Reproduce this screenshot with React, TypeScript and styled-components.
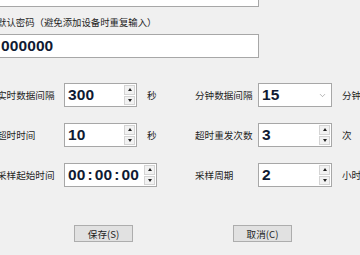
import React from 'react';
import styled, { createGlobalStyle } from 'styled-components';
import { ChevronDown } from 'lucide-react';

const GlobalStyle = createGlobalStyle`
  html, body {
    margin: 0;
    padding: 0;
    background: #f0f0f0;
  }
`;

const Page = styled.div`
  width: 360px;
  height: 255px;
  overflow: hidden;
  background: #f0f0f0;
  font-family: "Noto Sans CJK SC", "Noto Sans", sans-serif;
  font-size: 10px;
  color: #1e1e1e;
`;

const Form = styled.div`
  margin-left: -3px;
  display: flex;
  flex-direction: column;
`;

const TextBox = styled.div<{ $top?: number }>`
  box-sizing: border-box;
  width: 262px;
  height: 24px;
  margin-top: ${(p) => p.$top ?? 0}px;
  background: #fff;
  border: 1px solid #a7a7a7;
  display: flex;
  align-items: center;
  padding-left: 3px;
`;

const Value = styled.span`
  font-family: "Liberation Sans", Arial, sans-serif;
  font-weight: bold;
  font-size: 15.5px;
  color: #0f1a33;
  letter-spacing: 0.1px;
`;

const Colon = styled.span`
  margin: 0 2px;
`;

const Caption = styled.div`
  height: 12px;
  line-height: 12px;
  margin-top: 9px;
  margin-bottom: 6px;
  white-space: nowrap;
  font-size: 9.4px;
`;

const Grid = styled.div`
  display: grid;
  grid-template-columns: 67px 73px 58px 63px 74px 1fr;
  grid-auto-rows: 24px;
  row-gap: 16px;
  margin-top: 25px;
  align-items: center;
`;

const Label = styled.div`
  font-size: 9.6px;
  white-space: nowrap;
`;

const Unit = styled.div`
  padding-left: 10px;
  font-size: 9.6px;
  white-space: nowrap;
`;

const Control = styled.div<{ $w?: number; $span?: number }>`
  box-sizing: border-box;
  width: ${(p) => p.$w ?? 73}px;
  height: 24px;
  grid-column: span ${(p) => p.$span ?? 1};
  background: #fff;
  border: 1px solid #a7a7a7;
  display: flex;
  align-items: center;
  padding: 1px 1px 1px 3px;
`;

const Field = styled.div`
  flex: 1;
  display: flex;
  align-items: center;
  height: 100%;
`;

const Spin = styled.div`
  width: 11px;
  height: 100%;
  display: flex;
  flex-direction: column;
  gap: 1px;
`;

const SpinBtn = styled.div<{ $up?: boolean }>`
  flex: 1;
  box-sizing: border-box;
  border: 1px solid #d4d4d4;
  background: #f2f2f2;
  display: flex;
  align-items: center;
  justify-content: center;

  &::after {
    content: '';
    width: 0;
    height: 0;
    border-left: 2.5px solid transparent;
    border-right: 2.5px solid transparent;
    ${(p) => (p.$up ? 'border-bottom: 3px solid #222;' : 'border-top: 3px solid #222;')}
  }
`;

const Chevron = styled.div`
  width: 16px;
  display: flex;
  align-items: center;
  justify-content: center;
  color: #808080;
`;

const Buttons = styled.div`
  display: grid;
  grid-template-columns: 59px 59px;
  column-gap: 100px;
  margin-top: 38px;
  margin-left: 74px;
`;

const Button = styled.div`
  box-sizing: border-box;
  height: 17px;
  background: #e1e1e1;
  border: 1px solid #adadad;
  display: flex;
  align-items: center;
  justify-content: center;
  font-size: 9.6px;
  color: #1e1e1e;
`;

const SpinBox: React.FC<{ children: React.ReactNode; w?: number; span?: number }> = ({ children, w, span }) => (
  <Control $w={w} $span={span}>
    <Field>
      <Value>{children}</Value>
    </Field>
    <Spin>
      <SpinBtn $up />
      <SpinBtn />
    </Spin>
  </Control>
);

const ComboBox: React.FC<{ value: string }> = ({ value }) => (
  <Control $w={74}>
    <Field>
      <Value>{value}</Value>
    </Field>
    <Chevron>
      <ChevronDown size={9} strokeWidth={1.5} />
    </Chevron>
  </Control>
);

export default function App() {
  return (
    <Page>
      <GlobalStyle />
      <Form>
        <TextBox $top={-17} />
        <Caption>默认密码（避免添加设备时重复输入）</Caption>
        <TextBox>
          <Value>000000</Value>
        </TextBox>
        <Grid>
          <Label>实时数据间隔</Label>
          <SpinBox>300</SpinBox>
          <Unit>秒</Unit>
          <Label>分钟数据间隔</Label>
          <ComboBox value="15" />
          <Unit>分钟</Unit>

          <Label>超时时间</Label>
          <SpinBox>10</SpinBox>
          <Unit>秒</Unit>
          <Label>超时重发次数</Label>
          <SpinBox w={74}>3</SpinBox>
          <Unit>次</Unit>

          <Label>采样起始时间</Label>
          <SpinBox w={93} span={2}>
            00<Colon>:</Colon>00<Colon>:</Colon>00
          </SpinBox>
          <Label>采样周期</Label>
          <SpinBox w={74}>2</SpinBox>
          <Unit>小时</Unit>
        </Grid>
      </Form>
      <Buttons>
        <Button>保存(S)</Button>
        <Button>取消(C)</Button>
      </Buttons>
    </Page>
  );
}
